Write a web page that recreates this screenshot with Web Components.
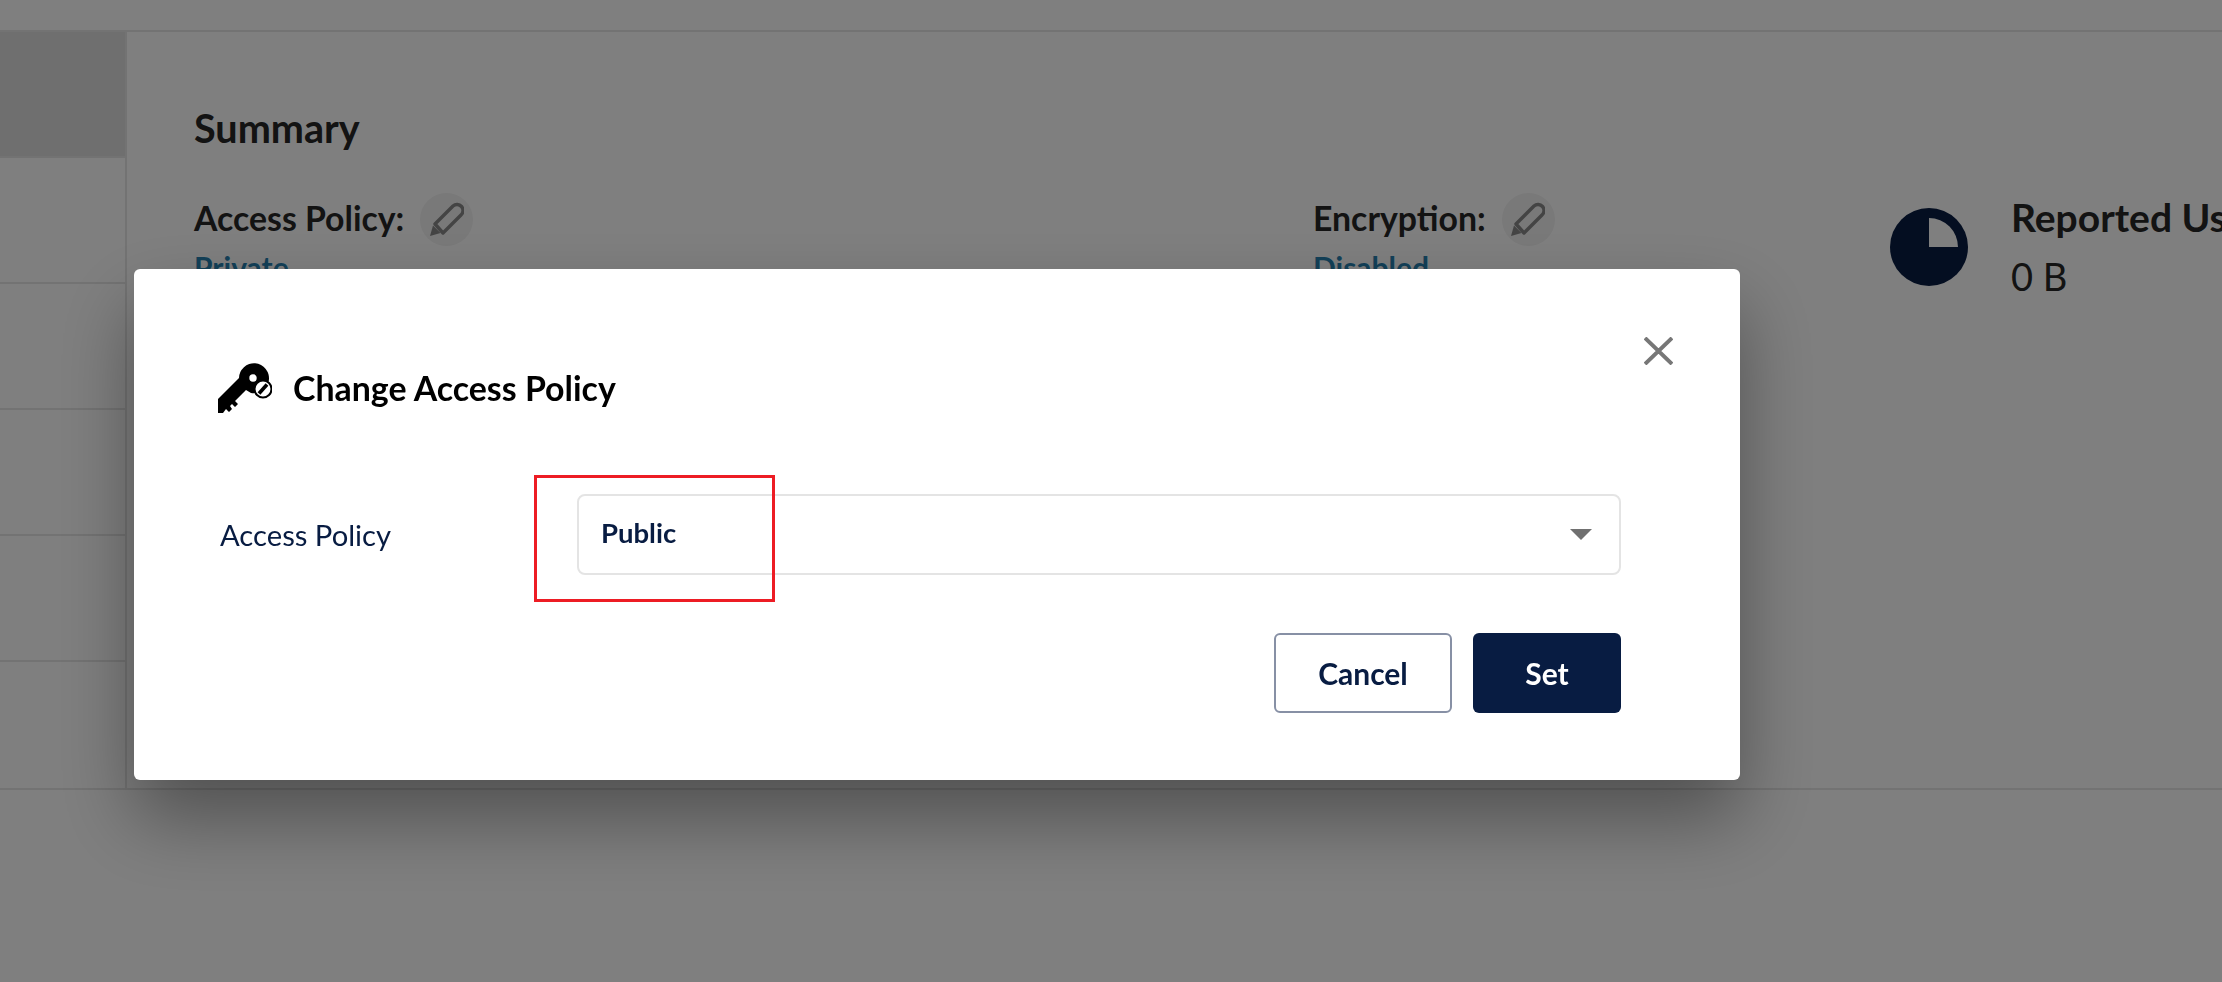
<!DOCTYPE html>
<html>
<head>
<meta charset="utf-8">
<title>Change Access Policy</title>
<style>
    html, body { margin: 0; height: 100%; overflow: hidden; background: #fff; font-family: Lato, "Liberation Sans", sans-serif; }
</style>
</head>
<body>
<bucket-page></bucket-page>
<policy-modal></policy-modal>
<script>
const PENCIL = `<svg width="34" height="34" viewBox="0 0 34 34" fill="none">
    <path d="M5 22 L23 4 A6 6 0 0 1 31 13 L13 31 Z" stroke="currentColor" stroke-width="3.4" stroke-linejoin="round"/>
    <path d="M0 34 L3 23.5 L10.5 31 Z" fill="currentColor"/>
</svg>`;

class SummaryField extends HTMLElement {
    constructor() {
        super();
        this.attachShadow({ mode: "open" });
        this.shadowRoot.innerHTML = `
            <style>
                :host { display: block; }
                .label { display: flex; align-items: center; gap: 16px; height: 54px; font-size: 33.8px; font-weight: 700; color: #262626; }
                .label slot { display: block; margin-top: -2px; }
                .edit { display: flex; align-items: center; justify-content: center; width: 53px; height: 53px; border-radius: 50%; background: #f2f2f2; color: #888; }
                .value { font-size: 30px; font-weight: 700; color: #2781b0; line-height: 34px; margin-top: 4px; }
            </style>
            <div class="label"><slot></slot><span class="edit">${PENCIL}</span></div>
            <div class="value">${this.getAttribute("value")}</div>
        `;
    }
}
customElements.define("summary-field", SummaryField);

class BucketPage extends HTMLElement {
    constructor() {
        super();
        this.attachShadow({ mode: "open" });
        this.shadowRoot.innerHTML = `
            <style>
                :host { display: block; width: 2222px; }
                .top { height: 30px; border-bottom: 2px solid #e6e6e6; }
                .body { display: flex; height: 756px; border-bottom: 2px solid #e6e6e6; }
                .side { width: 125px; border-right: 2px solid #e6e6e6; flex: none; }
                .side div { height: 124px; border-bottom: 2px solid #e6e6e6; }
                .side div.active { background: #dedede; }
                .main { flex: 1; padding: 0 0 0 67px; min-width: 0; overflow: hidden; }
                h2 { margin: 71px 0 0; height: 50px; line-height: 50px; font-size: 39.6px; font-weight: 700; color: #262626; }
                .row { display: grid; grid-template-columns: 1119px 577px auto; margin-top: 39px; }
                .usage { display: flex; gap: 43px; }
                .usage svg { margin-top: 16px; flex: none; }
                .usage-text b { display: block; font-size: 39px; line-height: 50px; font-weight: 700; color: #262626; white-space: nowrap; }
                .usage-text span { font-size: 38px; line-height: 68px; color: #262626; }
            </style>
            <div class="top"></div>
            <div class="body">
                <div class="side">
                    <div class="active"></div><div></div><div></div><div></div><div></div>
                </div>
                <div class="main">
                    <h2>Summary</h2>
                    <div class="row">
                        <summary-field value="Private">Access Policy:</summary-field>
                        <summary-field value="Disabled">Encryption:</summary-field>
                        <div class="usage">
                            <svg width="78" height="78" viewBox="0 0 78 78"><circle cx="39" cy="39" r="39" fill="#081c42"/><path d="M39 10 A29 29 0 0 1 68 39 H39 Z" fill="#fff"/></svg>
                            <div class="usage-text"><b>Reported Usage:</b><span>0 B</span></div>
                        </div>
                    </div>
                </div>
            </div>
        `;
    }
}
customElements.define("bucket-page", BucketPage);

class PolicySelect extends HTMLElement {
    constructor() {
        super();
        this.attachShadow({ mode: "open" });
        this.shadowRoot.innerHTML = `
            <style>
                :host { display: block; flex: 1; position: relative; }
                .box { display: flex; align-items: center; justify-content: space-between; box-sizing: border-box; height: 81px; padding: 0 27px 0 22px; border: 2px solid #e4e4e4; border-radius: 8px; font-size: 27.5px; font-weight: 700; color: #081c42; }
                .box span:first-child { margin-bottom: 5px; }
                .arrow { width: 0; height: 0; border-left: 11px solid transparent; border-right: 11px solid transparent; border-top: 11px solid #707070; }
                .mark { position: absolute; left: -43px; top: -19px; width: 241px; height: 127px; box-sizing: border-box; border: 3px solid #ed1c24; }
            </style>
            <div class="box"><span>Public</span><span class="arrow"></span></div>
            <div class="mark"></div>
        `;
    }
}
customElements.define("policy-select", PolicySelect);

class PolicyModal extends HTMLElement {
    constructor() {
        super();
        this.attachShadow({ mode: "open" });
        this.shadowRoot.innerHTML = `
            <style>
                :host { display: block; position: fixed; inset: 0; background: rgba(0, 0, 0, 0.5); box-sizing: border-box; padding: 269px 0 0 134px; }
                .dialog { position: relative; box-sizing: border-box; width: 1606px; height: 511px; padding: 94px 119px 0 84px; background: #fff; border-radius: 6px; box-shadow: 0 38px 76px rgba(0, 0, 0, 0.37); }
                .title { display: flex; align-items: center; gap: 21px; height: 50px; font-size: 33.9px; font-weight: 700; color: #000; }
                .title span { margin-top: -1px; }
                .close { position: absolute; left: 1510px; top: 68px; }
                .field { display: flex; align-items: center; margin-top: 81px; }
                label { width: 357px; margin-left: 2px; font-size: 29.2px; color: #081c42; }
                .actions { display: flex; justify-content: flex-end; gap: 21px; margin-top: 58px; }
                button { box-sizing: border-box; height: 80px; border-radius: 6px; font: 700 30px Lato, sans-serif; }
                .cancel { width: 178px; background: #fff; border: 2px solid #8790a5; color: #081c42; }
                .set { width: 148px; background: #081c42; border: 0; color: #fff; }
            </style>
            <div class="dialog">
                <div class="title">
                    <svg width="54" height="50" viewBox="0 0 54 50">
                        <path d="M0 36 L21 15 A15 15 0 1 1 33 30 L28 27 L17 38 L20 41 L17 44 L14 41 L12 43 L14 46 L11 49 L8 46 L5 50 L0 50 Z" fill="#000"/>
                        <circle cx="35" cy="15" r="3.7" fill="#fff"/>
                        <circle cx="45" cy="26" r="8.5" fill="#fff" stroke="#000" stroke-width="2"/>
                        <path d="M41 30.5 L49 21.5" stroke="#000" stroke-width="3.6"/>
                    </svg>
                    <span>Change Access Policy</span>
                </div>
                <svg class="close" width="29" height="28" viewBox="0 0 29 28"><path d="M1 1 L28 27 M28 1 L1 27" stroke="#777" stroke-width="4"/></svg>
                <div class="field">
                    <label>Access Policy</label>
                    <policy-select></policy-select>
                </div>
                <div class="actions">
                    <button class="cancel">Cancel</button>
                    <button class="set">Set</button>
                </div>
            </div>
        `;
    }
}
customElements.define("policy-modal", PolicyModal);
</script>
</body>
</html>
